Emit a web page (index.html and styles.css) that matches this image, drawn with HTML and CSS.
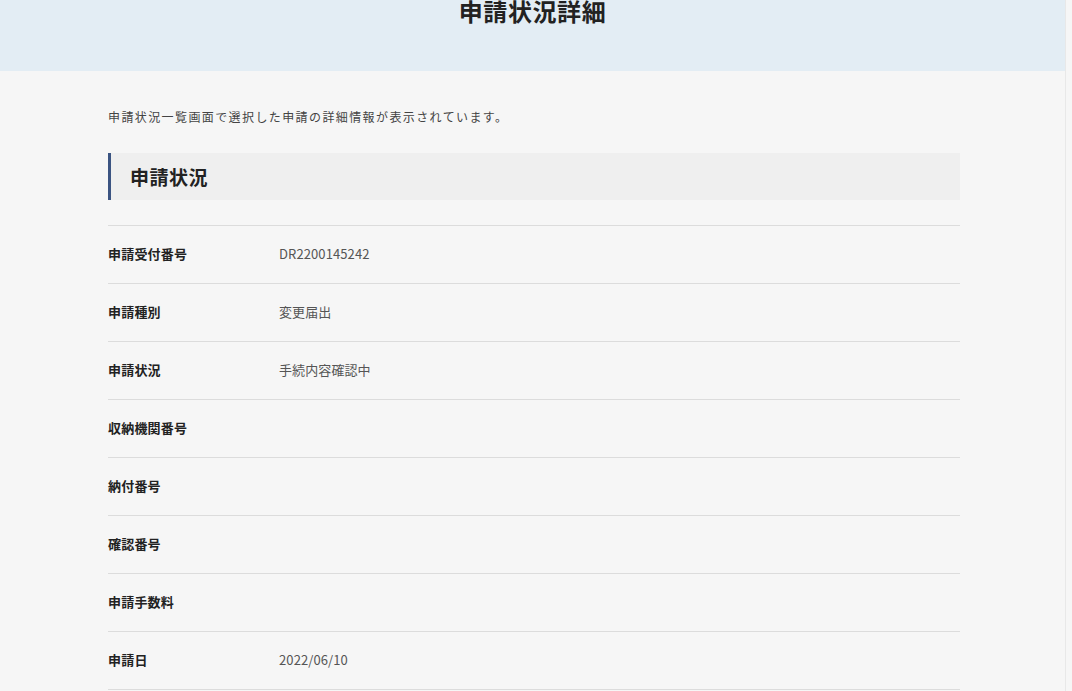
FILE: index.html
```html
<!DOCTYPE html>
<html lang="ja">
<head>
<meta charset="utf-8">
<title>申請状況詳細</title>
<link rel="stylesheet" href="styles.css">
</head>
<body>
<div class="page">
  <header class="header">
    <h1 class="title">申請状況詳細</h1>
  </header>
  <main class="main">
    <p class="intro">申請状況一覧画面で選択した申請の詳細情報が表示されています。</p>
    <h2 class="section-title">申請状況</h2>
    <dl class="details">
      <div class="row"><dt>申請受付番号</dt><dd>DR2200145242</dd></div>
      <div class="row"><dt>申請種別</dt><dd>変更届出</dd></div>
      <div class="row"><dt>申請状況</dt><dd>手続内容確認中</dd></div>
      <div class="row"><dt>収納機関番号</dt><dd></dd></div>
      <div class="row"><dt>納付番号</dt><dd></dd></div>
      <div class="row"><dt>確認番号</dt><dd></dd></div>
      <div class="row"><dt>申請手数料</dt><dd></dd></div>
      <div class="row"><dt>申請日</dt><dd>2022/06/10</dd></div>
    </dl>
  </main>
</div>
</body>
</html>
```

FILE: styles.css
```css
html, body {
  margin: 0;
  padding: 0;
}
body {
  background: #f6f6f6;
  font-family: "Noto Sans CJK JP", "Noto Sans", sans-serif;
  color: #222;
  overflow: hidden;
}
.page {
  width: 1065px;
  height: 691px;
  border-right: 1px solid #e8e8e8;
  background: #f6f6f6;
  overflow: hidden;
}
.header {
  background: #e3edf4;
  height: 71px;
  display: flex;
  justify-content: center;
  align-items: flex-start;
}
.title {
  margin: -6px 0 0;
  font-size: 24px;
  line-height: 34px;
  font-weight: 700;
  color: #222;
  letter-spacing: 0.6px;
}
.main {
  width: 852px;
  margin: 0 0 0 108px;
  padding-top: 36px;
}
.intro {
  margin: 0;
  font-size: 12px;
  line-height: 20px;
  letter-spacing: 1.4px;
  color: #444;
}
.section-title {
  margin: 26px 0 0;
  height: 47px;
  box-sizing: border-box;
  background: #efefef;
  border-left: 3px solid #3b5482;
  padding-left: 19px;
  display: flex;
  align-items: center;
  font-size: 19px;
  font-weight: 700;
  color: #222;
  letter-spacing: 0.5px;
}
.details {
  margin: 25px 0 0;
  border-top: 1px solid #dcdcdc;
}
.row {
  display: flex;
  align-items: center;
  height: 58px;
  padding-bottom: 3px;
  box-sizing: border-box;
  border-bottom: 1px solid #dcdcdc;
}
.row dt {
  width: 171px;
  flex: none;
  font-size: 13px;
  font-weight: 700;
  color: #222;
  letter-spacing: 0.2px;
}
.row dd {
  margin: 0;
  font-size: 13px;
  color: #555;
  letter-spacing: 0.1px;
}
```
